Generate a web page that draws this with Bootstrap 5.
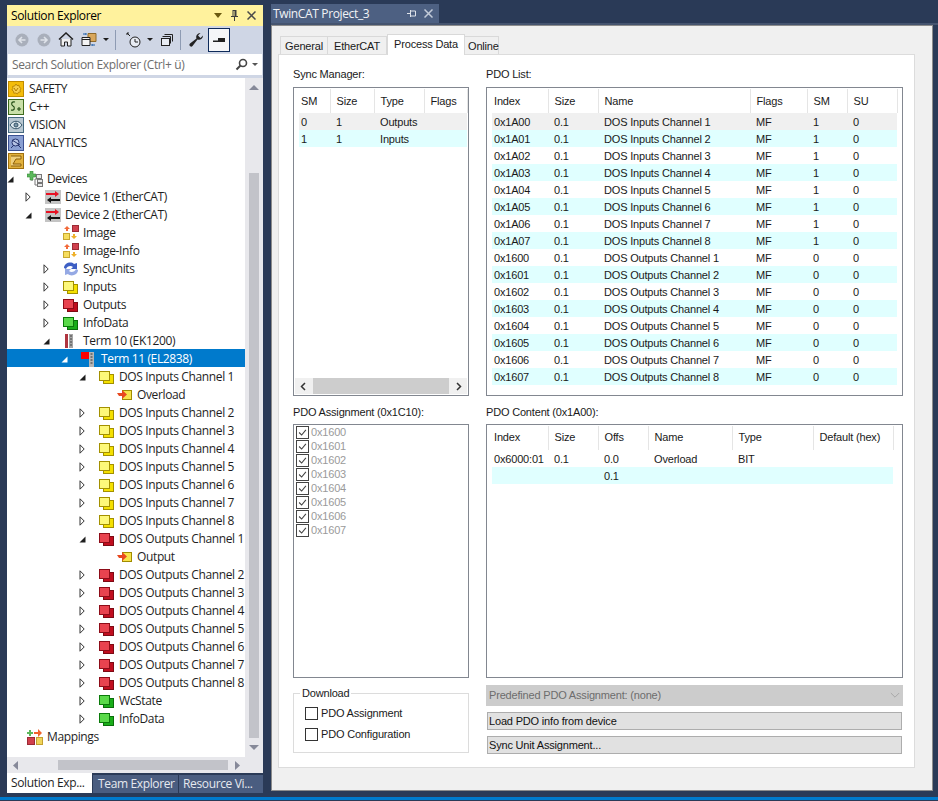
<!DOCTYPE html>
<html lang="en">
<head>
<meta charset="utf-8">
<title>TwinCAT Process Data</title>
<link href="https://cdn.jsdelivr.net/npm/bootstrap@5.3.0/dist/css/bootstrap.min.css" rel="stylesheet">
<script src="https://cdn.jsdelivr.net/npm/bootstrap@5.3.0/dist/js/bootstrap.bundle.min.js"></script>
<style>
html,body{width:938px;height:801px;overflow:hidden}
body{background:#2a3a57;font-family:"Open Sans","Noto Sans",sans-serif;font-size:12px;color:#1e1e1e;line-height:1;letter-spacing:-.36px}
.app{height:797px}
.statusbar{height:3px;background:#007acc}
/* left panel */
.sol{width:256px;margin:5px 0 0 7px;height:788px}
.sol-title{height:21px;background:#fff29d;color:#000;font-size:12px;padding:0 5px 0 4px}
.sol-tools{height:27px;background:#cfd6e5;padding-left:8px}
.sol-tools svg{display:block;flex:none}
.tsep{width:1px;height:20px;background:#8e9bb3;flex:none}
.pressed{width:22px;height:24px;background:#f5f6f8;border:1px solid #0e2a5a;margin-left:4px}
.caret-d{width:0;height:0;border-left:3px solid transparent;border-right:3px solid transparent;border-top:3px solid #1e1e1e;flex:none}
.sol-search{height:25px;background:#cfd6e5;padding:1px 1px 3px 1px}
.sol-search>div{height:21px;background:#fff;padding:0 4px;color:#6d6d6d;font-size:12px}
.tree-wrap{height:679px;background:#fff}
.tree{width:238px;padding-top:1px;overflow:hidden}
.t{height:18px;padding-top:2px;white-space:nowrap;color:#1e1e1e}
.t.sel{background:#007acc;color:#fff}
.t .arw{width:20px;flex:none;display:flex;align-items:center}
.t .ic{width:16px;height:16px;flex:none;margin-right:4px;display:block}
.k0{padding-left:1px}.k0 .ic{margin-right:5px}
.k1{padding-left:0}.k2{padding-left:18px}.k3{padding-left:36px}.k4{padding-left:54px}.k5{padding-left:72px}.k6{padding-left:90px}
.vs{width:18px;background:#e8e8ec;padding:0 4px}
.vs .thumb{width:10px;flex:none;background:#c2c3c9;margin-top:83px;height:565px}
.hs{height:16px;background:#e8e8ec;padding:0 0 0 6px}
.hs .thumb{height:10px;background:#c2c3c9;width:170px;margin-left:40px;flex:none}
.sol-tabs{height:20px}
.sol-tabs .nav-link{font-size:12px;padding:0 0 0 4px;border-radius:0;height:18px;margin-top:2px;background:#4a5d80;color:#e6e9ef;line-height:17px;white-space:nowrap}
.sol-tabs .nav-link.active{background:#fff;color:#1e1e1e;height:20px;margin-top:0;line-height:19px}
/* doc */
.doc{margin-left:8px;width:667px;margin-top:4px;height:787px}
.doc-tab{width:168px;height:19px;background:#4d6082;color:#f1f3f6;padding:0 6px 0 2px;font-size:12px}
.doc-line{height:2px;background:#45546f}
.frame{width:662px;height:766px;background:#f0f0f0;border:1px solid #8c8c8c;padding:8px 0 0 6px;font-family:"Liberation Sans",Arial,sans-serif;font-size:11px;color:#1a1a1a;letter-spacing:-.18px}
.ptabs{height:20px;padding-left:2px;border:0;flex-wrap:nowrap}
.ptabs .nav-link{font-size:11px;padding:0;height:18px;margin-top:2px;background:#f0f0f0;border:1px solid #d9d9d9;border-bottom:0;border-left:0;border-radius:0;color:#1a1a1a;text-align:center;line-height:18px}
.ptabs .nav-item:first-child .nav-link{border-left:1px solid #d9d9d9}
.ptabs .nav-link.active{background:#fff;height:21px;margin-top:0;margin-bottom:-1px;line-height:19px;border:1px solid #d9d9d9;border-bottom:0;position:relative;z-index:1}
.ptabs .nav-item:last-child .nav-link{padding-left:3px}
.panel{width:637px;height:714px;background:#fff;border:1px solid #dcdcdc;padding:12px 0 0 14px;gap:17px}
.c-l{width:176px}.c-r{width:417px}
.lbl{height:14px;line-height:14px;margin-bottom:6px;white-space:nowrap}
.lbl.sec{margin-top:9px;margin-bottom:5px}
.lv{border:1px solid #828790;background:#fff;padding:1px 0 0 5px}
.lv-top{height:309px}
.lv-bot{height:254px}
.pd{table-layout:fixed;--bs-table-bg:transparent;--bs-table-color:#1a1a1a;margin:0;font-size:11px;line-height:1}
.pd th,.pd td{padding:0 0 0 6px;white-space:nowrap;overflow:hidden;font-weight:400;border:0;vertical-align:middle;color:#1a1a1a}
.pd th:first-child,.pd td:first-child{padding-left:2px}
.pd th{height:24px;border-right:1px solid #e5e5e5;vertical-align:middle}
.pd td{height:17px;padding-top:1px}
.pd.cnt th{padding-bottom:2px}
.pd tr.s{--bs-table-bg:#f0f0f0}
.pd tr.a{--bs-table-bg:#e0ffff}
.pd thead th{background:#fff}
.hbar{height:16px;background:#f0f0f0;margin:auto 1px 1px -4px;padding:0 5px}
.hbar .thumb{height:16px;width:136px;background:#cdcdcd;margin:0 auto}
.cklist{padding:0 0 0 2px}
.ckrow{height:14px;color:#9a9a9a;gap:2px}
.form-check-input.ck{width:13px;height:13px;margin:0;border:1px solid #333;border-radius:0;background-color:#fff;opacity:1;flex:none;box-shadow:none}
.form-check-input.ck:checked{background-color:#fff;border-color:#444;background-image:url("data:image/svg+xml,%3csvg xmlns='http://www.w3.org/2000/svg' viewBox='0 0 13 13'%3e%3cpath fill='none' stroke='%23444' stroke-width='1.3' d='M2.500 6.500l3 3 5-6'/%3e%3c/svg%3e");background-size:100%}
.grp{height:67px;margin:8px 0 0;border:1px solid #dcdcdc;padding:0 0 0 11px;min-width:0}
.grp legend{float:none;width:auto;font-size:11px;line-height:14px;margin:0 0 0 -5px;padding:0 2px;height:14px}
.grp .ckr{gap:3px;height:14px;margin-top:6px}
.grp .ckr+.ckr{margin-top:7px}
.grp label{line-height:14px}
.pick.form-select{height:21px;margin-top:7px;min-height:0;padding:0 0 0 3px;border:0;border-radius:0;font-size:11px;letter-spacing:-.18px;line-height:21px;color:#6d6d6d;background-color:#ccc;background-image:url("data:image/svg+xml,%3csvg xmlns='http://www.w3.org/2000/svg' viewBox='0 0 12 8'%3e%3cpath fill='none' stroke='%23a0a0a0' d='M1 1l5 5 5-5'/%3e%3c/svg%3e");background-size:10px 7px;background-position:right 3px center;width:417px;opacity:1}
.btn.wf{width:415px;height:18px;margin:6px 0 0 1px;padding:0 0 0 1px;border:1px solid #adadad;border-radius:0;background:#e1e1e1;color:#111;font-size:11px;letter-spacing:-.18px;line-height:15px;text-align:left}
.w{display:block;flex:none}
</style>
</head>
<body>
<svg width="0" height="0" class="position-absolute">
<defs>
<symbol id="exp" viewBox="0 0 7 7"><path d="M6.500 .5v6H.5z" fill="currentColor"/></symbol>
<symbol id="col" viewBox="0 0 6 10"><path d="M1 .8L5.200 5 1 9.200z" fill="#fff" stroke="#333"/></symbol>
<symbol id="safety" viewBox="0 0 16 16"><rect x=".5" y=".5" width="15" height="15" fill="#f4bd0b" stroke="#c08a00"/><path d="M8 3l1 1.600 2-.3.4 2 1.600 1-1 1.700.4 1.900-2 .4-1 1.700-1.600-1-2 .2-.3-2-1.600-1.200 1-1.600-.3-2 2-.3z" fill="#f7cf4e" stroke="#b07b00" stroke-width=".8"/><path d="M6 7l2 3 2-3" fill="none" stroke="#b07b00"/></symbol>
<symbol id="cpp" viewBox="0 0 16 16"><rect x=".5" y=".5" width="15" height="15" fill="#c9dfa8" stroke="#3e6b1c"/><path d="M7 3c-4-1-4 3-2 4s2 5-2 4M9 10h4M11 8v4" fill="none" stroke="#1e4a10" stroke-width="1.100"/></symbol>
<symbol id="vision" viewBox="0 0 16 16"><rect x=".5" y=".5" width="15" height="15" fill="#b9c8d2" stroke="#476a80"/><path d="M2 8c3-5 9-5 12 0-3 5-9 5-12 0z" fill="#dbe6ec" stroke="#355468"/><circle cx="8" cy="8" r="2" fill="#7b97a8" stroke="#355468"/></symbol>
<symbol id="analytics" viewBox="0 0 16 16"><rect x=".5" y=".5" width="15" height="15" fill="#8a9fd2" stroke="#3c5192"/><circle cx="7.500" cy="7.500" r="3.500" fill="#b7c5e6" stroke="#26346e"/><path d="M3 13l3-3M10 10l3 3M4 5l8 5" stroke="#26346e" fill="none"/></symbol>
<symbol id="io" viewBox="0 0 16 16"><rect x=".5" y=".5" width="15" height="15" fill="#e2b23e" stroke="#a0700f"/><path d="M3 3h10v3H8l-3 5h8v2H3" fill="#efcf7c" stroke="#8a5e08"/></symbol>
<symbol id="devices" viewBox="0 0 16 16"><path d="M3 0h3v3h3v3H6v3H3V6H0V3h3z" fill="#5cb85c" stroke="#3b8a3b" stroke-width=".6"/><path d="M8 8h3M8 8v6h3M5 9v1" stroke="#777" fill="none"/><rect x="9.500" y="3.500" width="5" height="4" fill="#e8e8e8" stroke="#777"/><rect x="10.500" y="8.500" width="5" height="3" fill="#e8e8e8" stroke="#777"/><rect x="10.500" y="12.500" width="5" height="3" fill="#e8e8e8" stroke="#777"/></symbol>
<symbol id="device" viewBox="0 0 16 16"><rect y="1" width="16" height="14" fill="#c4c4c4"/><path d="M1 5h10" stroke="#e81123" stroke-width="2"/><path d="M10 2l4 3-4 3z" fill="#e81123"/><path d="M5 11h10" stroke="#111" stroke-width="2"/><path d="M6 8l-4 3 4 3z" fill="#111"/></symbol>
<symbol id="image" viewBox="0 0 16 16"><rect x="9.500" y=".5" width="6" height="6" fill="#d0414e" stroke="#9c2b36"/><rect x=".5" y="8.500" width="6" height="6" fill="#f6dd5e" stroke="#c8a830"/><path d="M4 1L1 4h2v2h2V4h2z" fill="#f26a3a"/><path d="M11 14l3-3h-2V9h-2v2H8z" fill="#eeb02a"/></symbol>
<symbol id="sync" viewBox="0 0 16 16"><path d="M1 7c0-5 7-7 10-4l3-1v6H8l2-2C8 4 4 5 3 8z" fill="#3d5fc4"/><path d="M15 9c0 5-7 7-10 4l-3 1V8h6l-2 2c2 2 6 1 7-2z" fill="#95a9e4"/></symbol>
<symbol id="yel" viewBox="0 0 16 16"><rect x="4.500" y="5.500" width="10" height="9" fill="#f4e000" stroke="#a39000"/><rect x=".5" y="2.500" width="10" height="9" fill="#fdf87a" stroke="#a39000"/></symbol>
<symbol id="red" viewBox="0 0 16 16"><rect x="4.500" y="5.500" width="10" height="9" fill="#c00d1e" stroke="#7d0a14"/><rect x=".5" y="2.500" width="10" height="9" fill="#e8434f" stroke="#8d0c18"/></symbol>
<symbol id="grn" viewBox="0 0 16 16"><rect x="4.500" y="5.500" width="10" height="9" fill="#19ad19" stroke="#0a6e0a"/><rect x=".5" y="2.500" width="10" height="9" fill="#5ada4a" stroke="#0a7a0a"/></symbol>
<symbol id="term10" viewBox="0 0 16 16"><rect x="2" y="1" width="3" height="14" fill="#b0353f"/><rect x="6" y="1" width="4" height="14" fill="#a6a6a6"/><path d="M7 3h2M7 6h2M7 9h2M7 12h2" stroke="#444"/></symbol>
<symbol id="term11" viewBox="0 0 16 16"><rect width="8" height="7" y="1" fill="#f00"/><rect x="8" y="1" width="5" height="15" fill="#b5b5b5"/><path d="M9.500 3h2M9.500 6h2M9.500 9h2M9.500 12h2" stroke="#333"/></symbol>
<symbol id="ovl" viewBox="0 0 16 16"><rect x="5.500" y="3.500" width="9" height="9" fill="#f7e34a" stroke="#a08c00"/><path d="M0 6h5V3l5 4.500L5 12V9H2z" fill="#e8481f"/></symbol>
<symbol id="mapg" viewBox="0 0 16 16"><rect x=".5" y="8.500" width="7" height="7" fill="#d0404c" stroke="#9c2b36"/><rect x="9.500" y="8.500" width="6" height="7" fill="#f0d45a" stroke="#c4a030"/><path d="M2 1h2v2h2v2H4v2H2V5H0V3h2z" fill="#5cb85c"/><path d="M7 3h4V0l4 4-4 4V5H7z" fill="#f0642c"/></symbol>
</defs>
</svg>

<div class="app d-flex">
  <aside class="sol d-flex flex-column">
    <div class="sol-title d-flex align-items-center">
      <span class="flex-grow-1">Solution Explorer</span>
      <svg width="8" height="5" viewBox="0 0 8 5"><path d="M0 0h8L4 5z" fill="#6b5a10"/></svg>
      <svg class="ms-2" width="9" height="13" viewBox="0 0 9 13"><path d="M2.500 1h4v6h1.500v1H5v4H4V8H1V7h1.500zM3.500 2v5h1V2z" fill="#3d3d3d"/></svg>
      <svg class="ms-2" width="9" height="9" viewBox="0 0 9 9" style="margin-right:2px"><path d="M.5.5l8 8M8.500.5l-8 8" stroke="#4a4a4a" stroke-width="1.500"/></svg>
    </div>
    <div class="sol-tools d-flex align-items-center">
      <svg width="14" height="14" viewBox="0 0 14 14" class="me-2"><circle cx="7" cy="7" r="6.500" fill="#a9afbb"/><path d="M10.500 7H4.500M7 4L4 7l3 3" stroke="#dfe3ea" stroke-width="1.600" fill="none"/></svg>
      <svg width="14" height="14" viewBox="0 0 14 14" style="margin-right:7px"><circle cx="7" cy="7" r="6.500" fill="#a9afbb"/><path d="M3.500 7h6M7 4l3 3-3 3" stroke="#dfe3ea" stroke-width="1.600" fill="none"/></svg>
      <svg width="16" height="15" viewBox="0 0 16 15" style="margin-right:7px"><path d="M1 7.500L8 1l7 6.500" fill="none" stroke="#222" stroke-width="1.500"/><path d="M3 7v7h3.500v-4h3v4H13V7" fill="#f0f0f0" stroke="#222"/></svg>
      <svg width="16" height="15" viewBox="0 0 16 15" style="margin-right:6px"><path d="M7 1.500h8v8H7z" fill="#d9a75b" stroke="#8f6a2a"/><path d="M1 5.500h8v8H1z" fill="#f4f4f4" stroke="#222"/><path d="M1 7.500h8" stroke="#222"/><path d="M2 2h3M5 1v2" stroke="#1f5fa8"/><path d="M11 13h3M11 12v2" stroke="#1f5fa8"/></svg>
      <span class="caret-d" style="margin-right:6px"></span>
      <span class="tsep" style="margin-right:10px"></span>
      <svg width="15" height="16" viewBox="0 0 15 16" style="margin-right:6px"><circle cx="9" cy="10" r="5" fill="#e8ecf3" stroke="#222"/><path d="M9 7v3h3M1 1l3 3M3 1H1v2" stroke="#222" fill="none"/></svg>
      <span class="caret-d" style="margin-right:8px"></span>
      <svg width="12" height="12" viewBox="0 0 12 12" style="margin-right:7px"><path d="M3.500.5h8v7M1.500 2.500h8v7" fill="none" stroke="#222"/><rect x=".5" y="4.500" width="8" height="7" fill="#e8ecf3" stroke="#222"/></svg>
      <span class="tsep" style="margin-right:8px"></span>
      <svg width="15" height="15" viewBox="0 0 15 15"><path d="M14 3.500a4 4 0 0 1-5.500 4L3.500 14A1.500 1.500 0 0 1 1 11.500l6.500-5A4 4 0 0 1 11.500 1L9 3.500 11.500 6z" fill="#222"/></svg>
      <span class="pressed d-flex align-items-center justify-content-center"><svg width="14" height="6" viewBox="0 0 14 6"><path d="M6 1h7v4H1V3.500h5z" fill="#222"/></svg></span>
    </div>
    <div class="sol-search">
      <div class="d-flex align-items-center">
        <span class="flex-grow-1">Search Solution Explorer (Ctrl+ ü)</span>
        <svg width="13" height="13" viewBox="0 0 13 13"><circle cx="8" cy="5" r="3.500" fill="none" stroke="#444" stroke-width="1.600"/><path d="M5.500 7.500L1.500 11.500" stroke="#444" stroke-width="2"/></svg>
        <span class="caret-d ms-1" style="border-top-color:#555"></span>
      </div>
    </div>
    <div class="tree-wrap d-flex">
      <div class="tree">
        <div class="t k0 d-flex align-items-center"><svg class="ic"><use href="#safety"/></svg>SAFETY</div>
        <div class="t k0 d-flex align-items-center"><svg class="ic"><use href="#cpp"/></svg>C++</div>
        <div class="t k0 d-flex align-items-center"><svg class="ic"><use href="#vision"/></svg>VISION</div>
        <div class="t k0 d-flex align-items-center"><svg class="ic"><use href="#analytics"/></svg>ANALYTICS</div>
        <div class="t k0 d-flex align-items-center"><svg class="ic"><use href="#io"/></svg>I/O</div>
        <div class="t k1 d-flex align-items-center"><span class="arw"><svg width="7" height="7"><use href="#exp"/></svg></span><svg class="ic"><use href="#devices"/></svg>Devices</div>
        <div class="t k2 d-flex align-items-center"><span class="arw"><svg width="6" height="10"><use href="#col"/></svg></span><svg class="ic"><use href="#device"/></svg>Device 1 (EtherCAT)</div>
        <div class="t k2 d-flex align-items-center"><span class="arw"><svg width="7" height="7"><use href="#exp"/></svg></span><svg class="ic"><use href="#device"/></svg>Device 2 (EtherCAT)</div>
        <div class="t k3 d-flex align-items-center"><span class="arw"></span><svg class="ic"><use href="#image"/></svg>Image</div>
        <div class="t k3 d-flex align-items-center"><span class="arw"></span><svg class="ic"><use href="#image"/></svg>Image-Info</div>
        <div class="t k3 d-flex align-items-center"><span class="arw"><svg width="6" height="10"><use href="#col"/></svg></span><svg class="ic"><use href="#sync"/></svg>SyncUnits</div>
        <div class="t k3 d-flex align-items-center"><span class="arw"><svg width="6" height="10"><use href="#col"/></svg></span><svg class="ic"><use href="#yel"/></svg>Inputs</div>
        <div class="t k3 d-flex align-items-center"><span class="arw"><svg width="6" height="10"><use href="#col"/></svg></span><svg class="ic"><use href="#red"/></svg>Outputs</div>
        <div class="t k3 d-flex align-items-center"><span class="arw"><svg width="6" height="10"><use href="#col"/></svg></span><svg class="ic"><use href="#grn"/></svg>InfoData</div>
        <div class="t k3 d-flex align-items-center"><span class="arw"><svg width="7" height="7"><use href="#exp"/></svg></span><svg class="ic"><use href="#term10"/></svg>Term 10 (EK1200)</div>
        <div class="t sel k4 d-flex align-items-center"><span class="arw"><svg width="7" height="7"><use href="#exp"/></svg></span><svg class="ic"><use href="#term11"/></svg>Term 11 (EL2838)</div>
        <div class="t k5 d-flex align-items-center"><span class="arw"><svg width="7" height="7"><use href="#exp"/></svg></span><svg class="ic"><use href="#yel"/></svg>DOS Inputs Channel 1</div>
        <div class="t k6 d-flex align-items-center"><span class="arw"></span><svg class="ic"><use href="#ovl"/></svg>Overload</div>
        <div class="t k5 d-flex align-items-center"><span class="arw"><svg width="6" height="10"><use href="#col"/></svg></span><svg class="ic"><use href="#yel"/></svg>DOS Inputs Channel 2</div>
        <div class="t k5 d-flex align-items-center"><span class="arw"><svg width="6" height="10"><use href="#col"/></svg></span><svg class="ic"><use href="#yel"/></svg>DOS Inputs Channel 3</div>
        <div class="t k5 d-flex align-items-center"><span class="arw"><svg width="6" height="10"><use href="#col"/></svg></span><svg class="ic"><use href="#yel"/></svg>DOS Inputs Channel 4</div>
        <div class="t k5 d-flex align-items-center"><span class="arw"><svg width="6" height="10"><use href="#col"/></svg></span><svg class="ic"><use href="#yel"/></svg>DOS Inputs Channel 5</div>
        <div class="t k5 d-flex align-items-center"><span class="arw"><svg width="6" height="10"><use href="#col"/></svg></span><svg class="ic"><use href="#yel"/></svg>DOS Inputs Channel 6</div>
        <div class="t k5 d-flex align-items-center"><span class="arw"><svg width="6" height="10"><use href="#col"/></svg></span><svg class="ic"><use href="#yel"/></svg>DOS Inputs Channel 7</div>
        <div class="t k5 d-flex align-items-center"><span class="arw"><svg width="6" height="10"><use href="#col"/></svg></span><svg class="ic"><use href="#yel"/></svg>DOS Inputs Channel 8</div>
        <div class="t k5 d-flex align-items-center"><span class="arw"><svg width="7" height="7"><use href="#exp"/></svg></span><svg class="ic"><use href="#red"/></svg>DOS Outputs Channel 1</div>
        <div class="t k6 d-flex align-items-center"><span class="arw"></span><svg class="ic"><use href="#ovl"/></svg>Output</div>
        <div class="t k5 d-flex align-items-center"><span class="arw"><svg width="6" height="10"><use href="#col"/></svg></span><svg class="ic"><use href="#red"/></svg>DOS Outputs Channel 2</div>
        <div class="t k5 d-flex align-items-center"><span class="arw"><svg width="6" height="10"><use href="#col"/></svg></span><svg class="ic"><use href="#red"/></svg>DOS Outputs Channel 3</div>
        <div class="t k5 d-flex align-items-center"><span class="arw"><svg width="6" height="10"><use href="#col"/></svg></span><svg class="ic"><use href="#red"/></svg>DOS Outputs Channel 4</div>
        <div class="t k5 d-flex align-items-center"><span class="arw"><svg width="6" height="10"><use href="#col"/></svg></span><svg class="ic"><use href="#red"/></svg>DOS Outputs Channel 5</div>
        <div class="t k5 d-flex align-items-center"><span class="arw"><svg width="6" height="10"><use href="#col"/></svg></span><svg class="ic"><use href="#red"/></svg>DOS Outputs Channel 6</div>
        <div class="t k5 d-flex align-items-center"><span class="arw"><svg width="6" height="10"><use href="#col"/></svg></span><svg class="ic"><use href="#red"/></svg>DOS Outputs Channel 7</div>
        <div class="t k5 d-flex align-items-center"><span class="arw"><svg width="6" height="10"><use href="#col"/></svg></span><svg class="ic"><use href="#red"/></svg>DOS Outputs Channel 8</div>
        <div class="t k5 d-flex align-items-center"><span class="arw"><svg width="6" height="10"><use href="#col"/></svg></span><svg class="ic"><use href="#grn"/></svg>WcState</div>
        <div class="t k5 d-flex align-items-center"><span class="arw"><svg width="6" height="10"><use href="#col"/></svg></span><svg class="ic"><use href="#grn"/></svg>InfoData</div>
        <div class="t k1 d-flex align-items-center"><span class="arw"></span><svg class="ic"><use href="#mapg"/></svg>Mappings</div>
      </div>
      <div class="vs d-flex flex-column">
        <svg width="10" height="5" viewBox="0 0 10 5" class="w" style="margin-top:7px"><path d="M0 5L5 0l5 5z" fill="#868999"/></svg>
        <div class="thumb"></div>
        <svg width="10" height="5" viewBox="0 0 10 5" class="w" style="margin-top:7px"><path d="M0 0l5 5 5-5z" fill="#868999"/></svg>
      </div>
    </div>
    <div class="hs d-flex align-items-center">
      <svg class="w" width="5" height="9" viewBox="0 0 5 9"><path d="M5 0L0 4.500 5 9z" fill="#868999"/></svg>
      <div class="thumb"></div>
      <svg class="w" width="5" height="9" viewBox="0 0 5 9" style="margin-left:7px"><path d="M0 0l5 4.500L0 9z" fill="#868999"/></svg>
    </div>
    <ul class="nav sol-tabs flex-nowrap">
      <li class="nav-item"><a class="nav-link active" style="width:85px" href="#">Solution Exp...</a></li>
      <li class="nav-item ms-0"><a class="nav-link" style="width:86px;border-left:1px solid #2a3a57;padding-left:5px" href="#">Team Explorer</a></li>
      <li class="nav-item"><a class="nav-link" style="width:85px;border-left:1px solid #2a3a57;padding-left:4px" href="#">Resource Vi...</a></li>
    </ul>
  </aside>

  <main class="doc d-flex flex-column">
    <div class="doc-tab d-flex align-items-center">
      <span class="flex-grow-1">TwinCAT Project_3</span>
      <svg width="9" height="9" viewBox="0 0 9 9" class="me-2"><path d="M0 4.500h3M3.500 1v7M3.500 2h5M3.500 7h5M8.500 2v5" stroke="#dfe3ea" fill="none"/></svg>
      <svg width="9" height="9" viewBox="0 0 9 9"><path d="M.5.5l8 8M8.500.5l-8 8" stroke="#c3cbd9" stroke-width="1.500"/></svg>
    </div>
    <div class="doc-line"></div>
    <div class="frame">
      <ul class="nav ptabs">
        <li class="nav-item"><a class="nav-link" style="width:48px" href="#">General</a></li>
        <li class="nav-item"><a class="nav-link" style="width:59px" href="#">EtherCAT</a></li>
        <li class="nav-item"><a class="nav-link active" style="width:78px" href="#">Process Data</a></li>
        <li class="nav-item"><a class="nav-link" style="width:34px" href="#">Online</a></li>
      </ul>
      <div class="panel d-flex">
        <div class="c-l d-flex flex-column">
          <div class="lbl">Sync Manager:</div>
          <div class="lv lv-top d-flex flex-column">
            <table class="table table-borderless pd" style="width:168px">
              <colgroup><col style="width:31px"><col style="width:44px"><col style="width:50px"><col style="width:43px"></colgroup>
              <thead><tr><th>SM</th><th>Size</th><th>Type</th><th>Flags</th></tr></thead>
              <tbody>
                <tr class="s"><td>0</td><td>1</td><td>Outputs</td><td></td></tr>
                <tr class="a"><td>1</td><td>1</td><td>Inputs</td><td></td></tr>
              </tbody>
            </table>
            <div class="hbar d-flex align-items-center">
              <svg class="w" width="6" height="9" viewBox="0 0 6 9"><path d="M5 1L1.500 4.500 5 8" fill="none" stroke="#333" stroke-width="1.500"/></svg>
              <div class="thumb"></div>
              <svg class="w" width="6" height="9" viewBox="0 0 6 9"><path d="M1 1l3.500 3.500L1 8" fill="none" stroke="#333" stroke-width="1.500"/></svg>
            </div>
          </div>
          <div class="lbl sec">PDO Assignment (0x1C10):</div>
          <div class="lv lv-bot cklist">
            <div class="ckrow d-flex align-items-center"><input class="form-check-input ck" type="checkbox" checked disabled aria-label="0x1600"><span>0x1600</span></div>
            <div class="ckrow d-flex align-items-center"><input class="form-check-input ck" type="checkbox" checked disabled aria-label="0x1601"><span>0x1601</span></div>
            <div class="ckrow d-flex align-items-center"><input class="form-check-input ck" type="checkbox" checked disabled aria-label="0x1602"><span>0x1602</span></div>
            <div class="ckrow d-flex align-items-center"><input class="form-check-input ck" type="checkbox" checked disabled aria-label="0x1603"><span>0x1603</span></div>
            <div class="ckrow d-flex align-items-center"><input class="form-check-input ck" type="checkbox" checked disabled aria-label="0x1604"><span>0x1604</span></div>
            <div class="ckrow d-flex align-items-center"><input class="form-check-input ck" type="checkbox" checked disabled aria-label="0x1605"><span>0x1605</span></div>
            <div class="ckrow d-flex align-items-center"><input class="form-check-input ck" type="checkbox" checked disabled aria-label="0x1606"><span>0x1606</span></div>
            <div class="ckrow d-flex align-items-center"><input class="form-check-input ck" type="checkbox" checked disabled aria-label="0x1607"><span>0x1607</span></div>
          </div>
          <fieldset class="grp">
            <legend>Download</legend>
            <div class="ckr d-flex align-items-center"><input class="form-check-input ck" type="checkbox" id="c1"><label for="c1">PDO Assignment</label></div>
            <div class="ckr d-flex align-items-center"><input class="form-check-input ck" type="checkbox" id="c2"><label for="c2">PDO Configuration</label></div>
          </fieldset>
        </div>
        <div class="c-r d-flex flex-column">
          <div class="lbl">PDO List:</div>
          <div class="lv lv-top">
            <table class="table table-borderless pd" style="width:405px">
              <colgroup><col style="width:56px"><col style="width:50px"><col style="width:152px"><col style="width:57px"><col style="width:40px"><col style="width:50px"></colgroup>
              <thead><tr><th>Index</th><th>Size</th><th>Name</th><th>Flags</th><th>SM</th><th>SU</th></tr></thead>
              <tbody>
                <tr class="s"><td>0x1A00</td><td>0.1</td><td>DOS Inputs Channel 1</td><td>MF</td><td>1</td><td>0</td></tr>
                <tr class="a"><td>0x1A01</td><td>0.1</td><td>DOS Inputs Channel 2</td><td>MF</td><td>1</td><td>0</td></tr>
                <tr><td>0x1A02</td><td>0.1</td><td>DOS Inputs Channel 3</td><td>MF</td><td>1</td><td>0</td></tr>
                <tr class="a"><td>0x1A03</td><td>0.1</td><td>DOS Inputs Channel 4</td><td>MF</td><td>1</td><td>0</td></tr>
                <tr><td>0x1A04</td><td>0.1</td><td>DOS Inputs Channel 5</td><td>MF</td><td>1</td><td>0</td></tr>
                <tr class="a"><td>0x1A05</td><td>0.1</td><td>DOS Inputs Channel 6</td><td>MF</td><td>1</td><td>0</td></tr>
                <tr><td>0x1A06</td><td>0.1</td><td>DOS Inputs Channel 7</td><td>MF</td><td>1</td><td>0</td></tr>
                <tr class="a"><td>0x1A07</td><td>0.1</td><td>DOS Inputs Channel 8</td><td>MF</td><td>1</td><td>0</td></tr>
                <tr><td>0x1600</td><td>0.1</td><td>DOS Outputs Channel 1</td><td>MF</td><td>0</td><td>0</td></tr>
                <tr class="a"><td>0x1601</td><td>0.1</td><td>DOS Outputs Channel 2</td><td>MF</td><td>0</td><td>0</td></tr>
                <tr><td>0x1602</td><td>0.1</td><td>DOS Outputs Channel 3</td><td>MF</td><td>0</td><td>0</td></tr>
                <tr class="a"><td>0x1603</td><td>0.1</td><td>DOS Outputs Channel 4</td><td>MF</td><td>0</td><td>0</td></tr>
                <tr><td>0x1604</td><td>0.1</td><td>DOS Outputs Channel 5</td><td>MF</td><td>0</td><td>0</td></tr>
                <tr class="a"><td>0x1605</td><td>0.1</td><td>DOS Outputs Channel 6</td><td>MF</td><td>0</td><td>0</td></tr>
                <tr><td>0x1606</td><td>0.1</td><td>DOS Outputs Channel 7</td><td>MF</td><td>0</td><td>0</td></tr>
                <tr class="a"><td>0x1607</td><td>0.1</td><td>DOS Outputs Channel 8</td><td>MF</td><td>0</td><td>0</td></tr>
              </tbody>
            </table>
          </div>
          <div class="lbl sec">PDO Content (0x1A00):</div>
          <div class="lv lv-bot">
            <table class="table table-borderless pd cnt" style="width:401px">
              <colgroup><col style="width:56px"><col style="width:50px"><col style="width:50px"><col style="width:84px"><col style="width:81px"><col style="width:80px"></colgroup>
              <thead><tr><th>Index</th><th>Size</th><th>Offs</th><th>Name</th><th>Type</th><th>Default (hex)</th></tr></thead>
              <tbody>
                <tr><td>0x6000:01</td><td>0.1</td><td>0.0</td><td>Overload</td><td>BIT</td><td></td></tr>
                <tr class="a"><td></td><td></td><td>0.1</td><td></td><td></td><td></td></tr>
              </tbody>
            </table>
          </div>
          <select class="form-select pick" disabled aria-label="Predefined PDO Assignment"><option>Predefined PDO Assignment: (none)</option></select>
          <button type="button" class="btn wf">Load PDO info from device</button>
          <button type="button" class="btn wf">Sync Unit Assignment...</button>
        </div>
      </div>
    </div>
  </main>
</div>
<div class="statusbar"></div>
</body>
</html>
